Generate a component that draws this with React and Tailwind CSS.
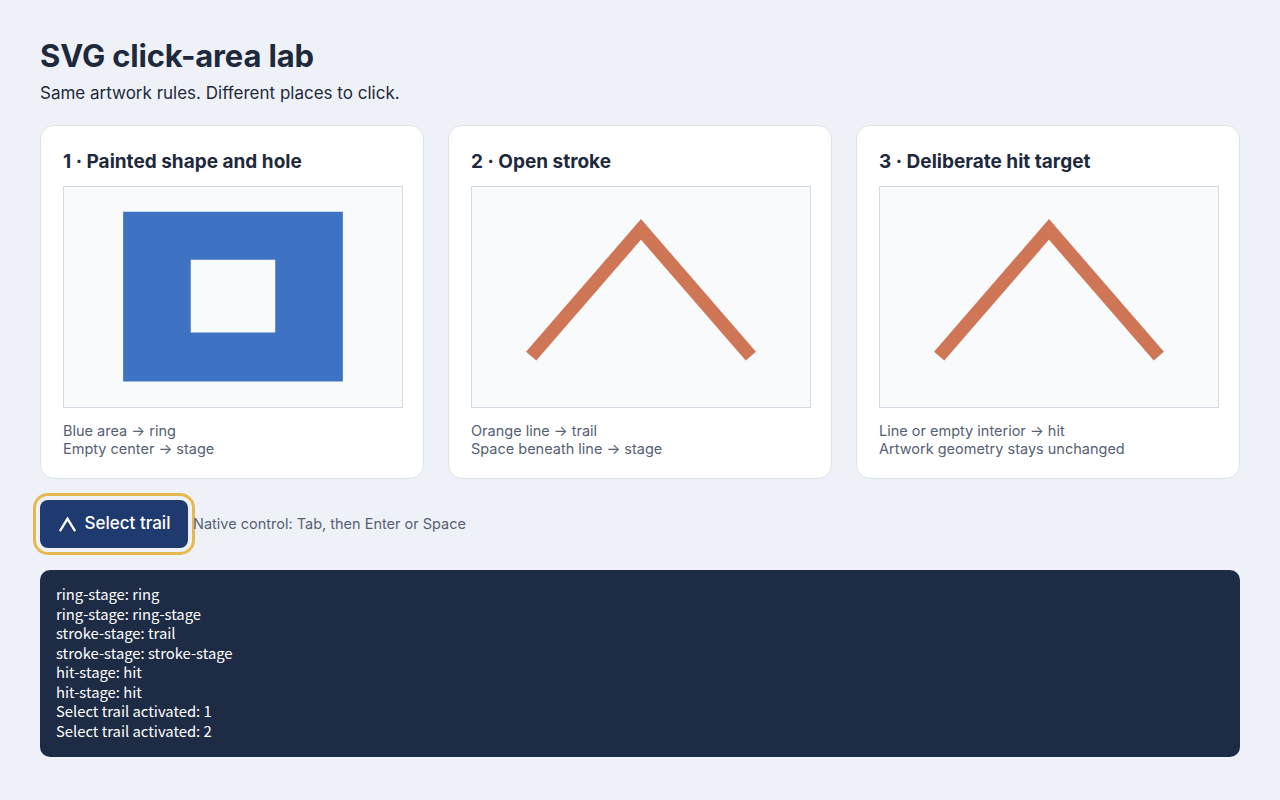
import { useState } from "react";

const cards = [
  {
    id: "ring",
    title: "1 · Painted shape and hole",
    notes: ["Blue area → ring", "Empty center → stage"],
  },
  {
    id: "stroke",
    title: "2 · Open stroke",
    notes: ["Orange line → trail", "Space beneath line → stage"],
  },
  {
    id: "hit",
    title: "3 · Deliberate hit target",
    notes: ["Line or empty interior → hit", "Artwork geometry stays unchanged"],
  },
];

const initialLog = [
  "ring-stage: ring",
  "ring-stage: ring-stage",
  "stroke-stage: trail",
  "stroke-stage: stroke-stage",
  "hit-stage: hit",
  "hit-stage: hit",
  "Select trail activated: 1",
  "Select trail activated: 2",
];

function Artwork({ id }) {
  if (id === "ring") {
    return (
      <svg viewBox="0 0 200 130" className="block h-[220px] w-full">
        <path d="M35 14.5h130v100.5H35z M75 43h50v43H75z" fill="#3e72c3" fillRule="evenodd" />
      </svg>
    );
  }
  return (
    <svg viewBox="0 0 200 130" className="block h-[220px] w-full">
      {id === "hit" && <path d="M35 100 L100 25 L165 100 Z" fill="transparent" />}
      <path d="M35 100 L100 25 L165 100" fill="none" stroke="#cf7656" strokeWidth="8" strokeLinejoin="miter" />
    </svg>
  );
}

export default function App() {
  const [log] = useState(initialLog);

  return (
    <div className="min-h-screen bg-[#eef2f8] px-10 pt-[38px] pb-10 font-['Inter','Liberation_Sans',sans-serif] text-[#1e293b]">
      <h1 className="text-[31px] font-bold leading-[36px] tracking-[-0.005em]">SVG click-area lab</h1>
      <p className="mt-[7px] text-[17px] leading-6">Same artwork rules. Different places to click.</p>

      <div className="mt-5 grid grid-cols-3 gap-6">
        {cards.map((card) => (
          <section key={card.id} className="rounded-[14px] border border-[#dde2ea] bg-white pl-[22px] pr-[20px] pt-[22px] pb-[20px]">
            <h2 className="text-[19px] font-bold leading-7">{card.title}</h2>
            <div className="mt-[10px] border border-[#d3d9e2] bg-[#f8fafc]">
              <Artwork id={card.id} />
            </div>
            <div className="mt-[14px] text-[14.5px] leading-[18px] text-[#566173]">
              {card.notes.map((note) => (
                <div key={note}>{note}</div>
              ))}
            </div>
          </section>
        ))}
      </div>

      <div className="mt-[21px] flex items-center gap-[5px]">
        <button className="flex h-12 w-[148px] items-center justify-center gap-2 rounded-lg bg-[#1f3a6f] text-[17px] font-medium text-white outline-[3px] outline-offset-[4px] outline-[#e6b84f] outline-solid">
          <svg viewBox="0 0 20 20" className="h-[19px] w-[19px]" fill="none" stroke="currentColor" strokeWidth="2.4">
            <path d="M2 17 L10 4 L18 17" />
          </svg>
          Select trail
        </button>
        <span className="text-[14.5px] text-[#566173]">Native control: Tab, then Enter or Space</span>
      </div>

      <div className="mt-[22px] rounded-[10px] bg-[#1d2b45] px-4 pt-[14px] pb-[17px] font-['Noto_Sans_CJK_KR','Noto_Sans',sans-serif] text-[14.8px] leading-[19.5px] text-white">
        {log.map((line, i) => (
          <div key={i}>{line}</div>
        ))}
      </div>
    </div>
  );
}
